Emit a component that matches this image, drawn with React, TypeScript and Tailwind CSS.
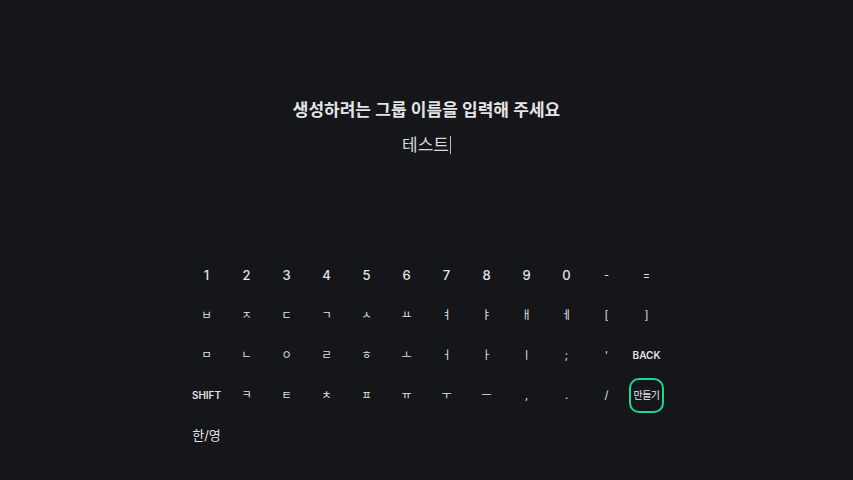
import React from "react";

const rows: string[][] = [
  ["1", "2", "3", "4", "5", "6", "7", "8", "9", "0", "-", "="],
  ["ㅂ", "ㅈ", "ㄷ", "ㄱ", "ㅅ", "ㅛ", "ㅕ", "ㅑ", "ㅐ", "ㅔ", "[", "]"],
  ["ㅁ", "ㄴ", "ㅇ", "ㄹ", "ㅎ", "ㅗ", "ㅓ", "ㅏ", "ㅣ", ";", "'", "BACK"],
  ["SHIFT", "ㅋ", "ㅌ", "ㅊ", "ㅍ", "ㅠ", "ㅜ", "ㅡ", ",", ".", "/", "만들기"],
  ["한/영"],
];

function Key({ label }: { label: string }) {
  const isWord = label === "BACK" || label === "SHIFT";
  const isNum = /^[0-9]$/.test(label);
  const isSubmit = label === "만들기";
  const isLang = label === "한/영";

  let size = "text-[11px]";
  if (isNum) size = "text-[13px] font-medium";
  if (isWord) size = "text-[10px] font-semibold";
  if (isLang) size = "text-[13px]";

  return (
    <div className="w-10 h-10 flex items-center justify-center">
      {isSubmit ? (
        <div className="w-[35px] h-[35px] rounded-[10px] border-2 border-[#1fd692] flex items-center justify-center text-[#e6e6e6] text-[10px] tracking-[-0.5px]">
          {label}
        </div>
      ) : (
        <span className={`${size} text-[#e2e2e2] leading-none`}>{label}</span>
      )}
    </div>
  );
}

export default function App() {
  return (
    <div
      className="w-[853px] h-[480px] bg-[#141619] flex flex-col items-center"
      style={{ fontFamily: "Inter, 'Noto Sans CJK KR', sans-serif" }}
    >
      <h1 className="mt-[98px] text-[17px] font-semibold text-[#e4e4e4] leading-6">
        생성하려는 그룹 이름을 입력해 주세요
      </h1>
      <div className="mt-[11px] flex items-center text-[17px] text-[#d8d8d8] leading-6">
        테스트
        <span className="w-px h-[18px] bg-[#bdbdbd] ml-px"></span>
      </div>
      <div className="mt-[98px] flex flex-col">
        {rows.map((row, i) => (
          <div key={i} className="flex">
            {row.map((k) => (
              <Key key={k} label={k} />
            ))}
          </div>
        ))}
      </div>
    </div>
  );
}
